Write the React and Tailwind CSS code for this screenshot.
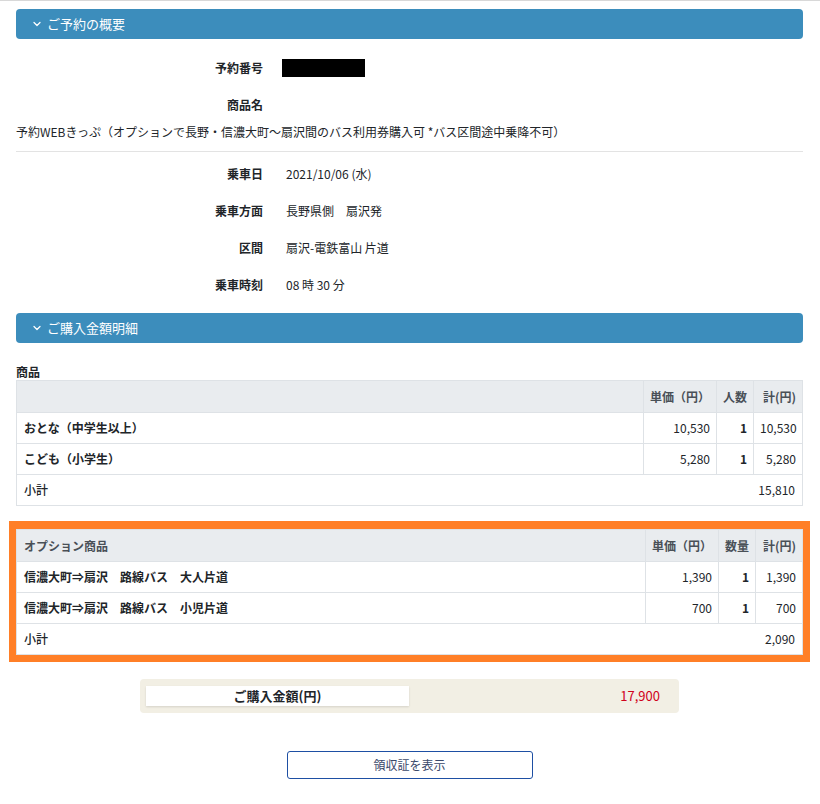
import { ChevronDown } from 'lucide-react';

const font = { fontFamily: '"Noto Sans CJK JP", "Noto Sans", sans-serif' };

function SectionBar({ title }) {
  return (
    <div className="h-[30px] rounded-[4px] bg-[#3c8dbc] text-white flex items-center pl-[15px] text-[13px]">
      <ChevronDown size={12} strokeWidth={2.5} className="mr-[4px]" />
      <span>{title}</span>
    </div>
  );
}

function InfoRow({ label, children }) {
  return (
    <div className="h-[37px] flex items-center text-[12px]">
      <div className="w-[247px] text-right font-bold text-[#212529]">{label}</div>
      <div className="ml-[23px] text-[#212529]">{children}</div>
    </div>
  );
}

function PriceTable({ title, qtyLabel, rows, subtotal, cols }) {
  return (
    <table className="w-full border-collapse text-[12px] text-[#212529] table-fixed">
      <colgroup>
        <col />
        <col className={cols[0]} />
        <col className={cols[1]} />
        <col className={cols[2]} />
      </colgroup>
      <thead>
        <tr className="h-[32px] bg-[#e9ecef] text-[#495057]">
          <th className="border border-[#dee2e6] text-left font-bold px-[7px]">{title}</th>
          <th className="border border-[#dee2e6] text-right font-bold px-[6px] whitespace-nowrap">単価（円）</th>
          <th className="border border-[#dee2e6] text-right font-bold px-[6px] whitespace-nowrap">{qtyLabel}</th>
          <th className="border border-[#dee2e6] text-right font-bold px-[6px] whitespace-nowrap">計(円)</th>
        </tr>
      </thead>
      <tbody>
        {rows.map(r => (
          <tr key={r.name} className="h-[31px]">
            <td className="border border-[#dee2e6] px-[7px] font-bold">{r.name}</td>
            <td className="border border-[#dee2e6] px-[6px] text-right">{r.price}</td>
            <td className="border border-[#dee2e6] px-[6px] text-right font-bold">{r.qty}</td>
            <td className="border border-[#dee2e6] px-[6px] text-right">{r.total}</td>
          </tr>
        ))}
        <tr className="h-[31px]">
          <td colSpan={4} className="border border-[#dee2e6] px-[7px]">
            <div className="flex justify-between">
              <span className="font-medium">小計</span>
              <span>{subtotal}</span>
            </div>
          </td>
        </tr>
      </tbody>
    </table>
  );
}

export default function App() {
  return (
    <div style={font} className="min-h-screen bg-white border-t border-[#d8d8d8]">
      <div className="pl-[16px] pr-[17px] pt-[8px] pb-[24px]">
        <SectionBar title="ご予約の概要" />

        <div className="mt-[10px]">
          <InfoRow label="予約番号">
            <div className="-ml-[4px] w-[83px] h-[18px] bg-black" />
          </InfoRow>
          <InfoRow label="商品名" />
        </div>
        <div className="h-[18px] leading-[18px] text-[12px] text-[#212529]">
          予約WEBきっぷ（オプションで長野・信濃大町〜扇沢間のバス利用券購入可 *バス区間途中乗降不可）
        </div>
        <div className="mt-[10px] border-t border-[#e3e3e3]" />

        <div className="mt-[3px]">
          <InfoRow label="乗車日">2021/10/06 (水)</InfoRow>
          <InfoRow label="乗車方面">長野県側　扇沢発</InfoRow>
          <InfoRow label="区間">扇沢-電鉄富山 片道</InfoRow>
          <InfoRow label="乗車時刻">08 時 30 分</InfoRow>
        </div>

        <div className="mt-[10px]">
          <SectionBar title="ご購入金額明細" />
        </div>

        <div className="mt-[20px] h-[17px] leading-[17px] text-[12px] font-bold text-[#212529]">商品</div>
        <PriceTable
          title=""
          qtyLabel="人数"
          cols={['w-[73px]', 'w-[37px]', 'w-[49px]']}
          rows={[
            { name: 'おとな（中学生以上）', price: '10,530', qty: '1', total: '10,530' },
            { name: 'こども（小学生）', price: '5,280', qty: '1', total: '5,280' },
          ]}
          subtotal="15,810"
        />

        <div className="mt-[15px] mx-[-7px] border-[7px] border-t-[8px] border-[#ff7f27]">
          <PriceTable
            title="オプション商品"
            qtyLabel="数量"
            cols={['w-[73px]', 'w-[37px]', 'w-[47px]']}
            rows={[
              { name: '信濃大町⇒扇沢　路線バス　大人片道', price: '1,390', qty: '1', total: '1,390' },
              { name: '信濃大町⇒扇沢　路線バス　小児片道', price: '700', qty: '1', total: '700' },
            ]}
            subtotal="2,090"
          />
        </div>

        {/* 合計 */}
        <div className="mt-[17px] flex justify-center">
          <div className="w-[539px] h-[34px] rounded-[4px] bg-[#f2efe4] flex items-center px-[6px]">
            <div className="w-[263px] h-[20px] bg-white shadow-[0_1px_2px_rgba(0,0,0,0.12)] flex items-center justify-center text-[13px] font-bold text-[#212529]">
              ご購入金額(円)
            </div>
            <div className="flex-1 text-right pr-[13px] text-[13px] text-[#d0021b]">17,900</div>
          </div>
        </div>

        <div className="mt-[38px] flex justify-center">
          <button className="w-[246px] h-[28px] rounded-[3px] border border-[#1e4fa3] bg-white text-[12px] text-[#3b4a6b]">
            領収証を表示
          </button>
        </div>
      </div>
    </div>
  );
}
